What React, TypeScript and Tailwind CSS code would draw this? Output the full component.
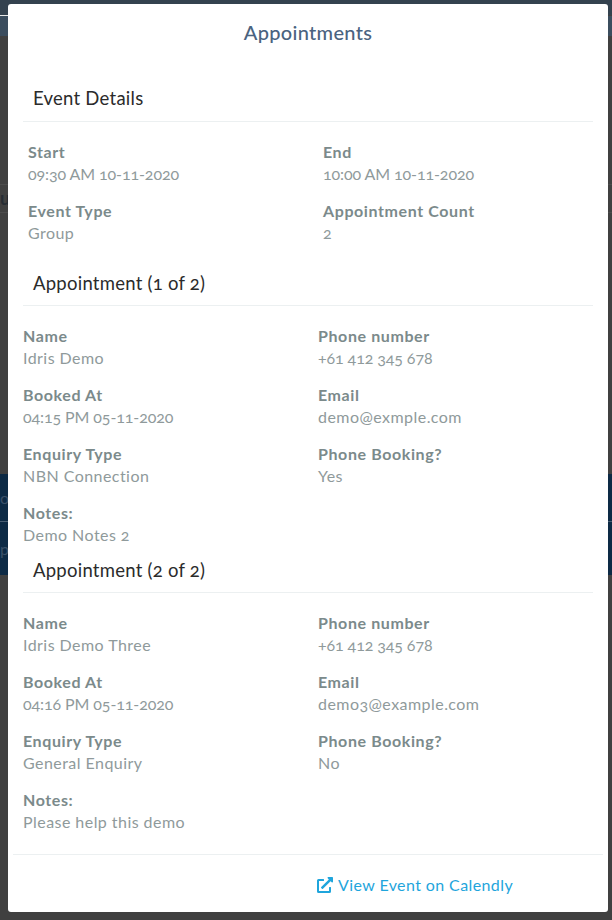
import { FaExternalLinkAlt } from "react-icons/fa";

const font = { fontFamily: "Lato, 'Open Sans', sans-serif" };

function Field({ label, value }: { label: string; value: string }) {
  const numeric = /\d\d/.test(value);
  return (
    <div className="h-[59px] pt-[5px]">
      <div className="text-[16px] leading-[22px] font-bold tracking-[0.6px] text-[#7b8a8b] oldstyle-nums">{label}</div>
      <div
        className={
          numeric
            ? "text-[16px] leading-[22px] tracking-[-0.1px] text-[#8f9a9b] oldstyle-nums"
            : "text-[16px] leading-[22px] tracking-[0.45px] text-[#8f9a9b] oldstyle-nums"
        }
      >
        {value}
      </div>
    </div>
  );
}

function SectionTitle({ children, tall }: { children: string; tall?: boolean }) {
  return (
    <div
      className={
        tall
          ? "h-[36px] border-b border-[#ecf0f1] pl-[10px] text-[18.5px] leading-[24px] tracking-[0.25px] text-[#2b2b2b] oldstyle-nums"
          : "h-[35px] border-b border-[#ecf0f1] pl-[10px] text-[18.5px] leading-[24px] tracking-[0.25px] text-[#2b2b2b] oldstyle-nums"
      }
    >
      {children}
    </div>
  );
}

function Appointment({
  title,
  rows,
  notes,
}: {
  title: string;
  rows: [string, string][];
  notes: string;
}) {
  return (
    <div>
      <SectionTitle>{title}</SectionTitle>
      <div className="grid grid-cols-[295px_1fr] pt-[14px]">
        {rows.map(([label, value]) => (
          <Field key={label} label={label} value={value} />
        ))}
        <Field label="Notes:" value={notes} />
      </div>
    </div>
  );
}

// page behind the modal, only its edges show
function Backdrop() {
  return (
    <div className="absolute inset-0 flex flex-col bg-[#404040]">
      <div className="h-[15px] bg-[#34424f]" />
      <div className="h-px w-[8px] bg-[#e8e8e8]" />
      <div className="h-[20px] bg-[#3b4d5e]" />
      <div className="h-[148px]" />
      <div className="h-px bg-[#4c4c4c]" />
      <div className="h-[27px] pl-0 text-[18px] leading-[27px] font-bold text-[#262c33]">ue</div>
      <div className="h-px bg-[#4c4c4c]" />
      <div className="h-[261px]" />
      <div className="flex h-[47px] items-center bg-[#0d2a45] text-[16px] text-[#3a5068]">oi</div>
      <div className="h-px bg-[#4a5f74]" />
      <div className="flex h-[53px] items-center bg-[#0d2a45] text-[16px] text-[#3a5068]">p</div>
    </div>
  );
}

export default function App() {
  return (
    <div style={font} className="relative h-[920px] w-[612px] overflow-hidden pt-[4px] pl-[8px]">
      <Backdrop />
      <div className="relative flex h-[908px] w-[600px] flex-col overflow-hidden rounded-[3px] bg-white">
        <div className="pt-[15px] text-center text-[20px] leading-[26px] font-medium tracking-[0.3px] text-[#4a6380]">
          Appointments
        </div>
        <div className="mt-[41px] px-[15px]">
          <SectionTitle tall>Event Details</SectionTitle>
          <div className="grid grid-cols-[295px_1fr] pt-[14px] pl-[5px]">
            <Field label="Start" value="09:30 AM 10-11-2020" />
            <Field label="End" value="10:00 AM 10-11-2020" />
            <Field label="Event Type" value="Group" />
            <Field label="Appointment Count" value="2" />
          </div>
          <div className="mt-[17px]">
            <Appointment
              title="Appointment (1 of 2)"
              notes="Demo Notes 2"
              rows={[
                ["Name", "Idris Demo"],
                ["Phone number", "+61 412 345 678"],
                ["Booked At", "04:15 PM 05-11-2020"],
                ["Email", "demo@exmple.com"],
                ["Enquiry Type", "NBN Connection"],
                ["Phone Booking?", "Yes"],
              ]}
            />
          </div>
          <div className="mt-[2px]">
            <Appointment
              title="Appointment (2 of 2)"
              notes="Please help this demo"
              rows={[
                ["Name", "Idris Demo Three"],
                ["Phone number", "+61 412 345 678"],
                ["Booked At", "04:16 PM 05-11-2020"],
                ["Email", "demo3@example.com"],
                ["Enquiry Type", "General Enquiry"],
                ["Phone Booking?", "No"],
              ]}
            />
          </div>
        </div>
        <div className="mx-[5px] mt-auto flex h-[58px] items-center border-t border-[#ecf0f1] pt-[3px] pl-[304px] text-[16px] tracking-[0.4px] text-[#1fa5dc]">
          <FaExternalLinkAlt className="mr-[5px] h-[16px] w-[16px]" />
          View Event on Calendly
        </div>
      </div>
    </div>
  );
}
